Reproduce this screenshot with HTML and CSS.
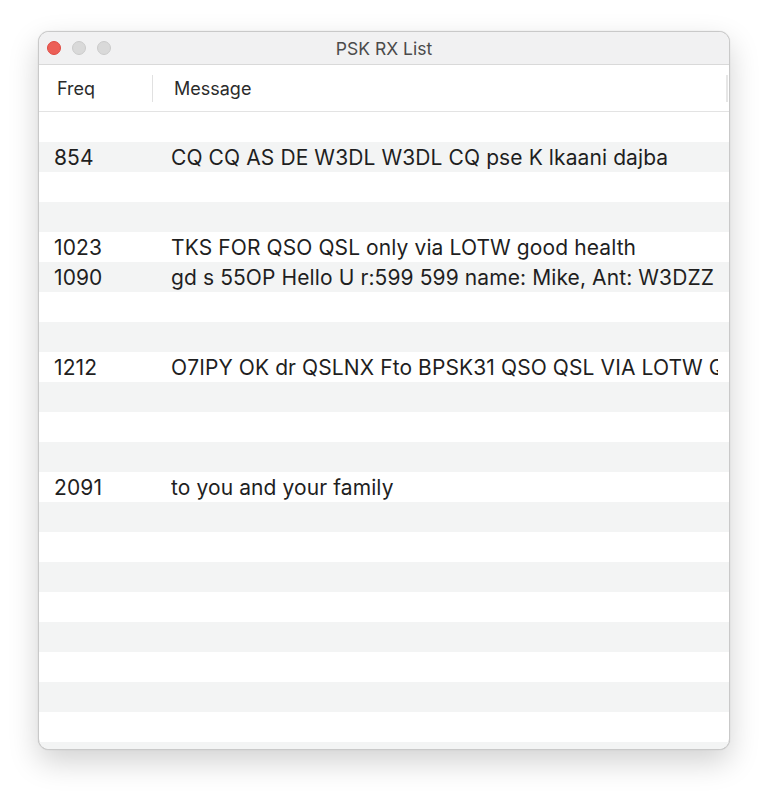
FILE: index.html
```html
<!DOCTYPE html>
<html lang="en">

<head>
  <meta charset="UTF-8">
  <meta name="viewport" content="width=device-width, initial-scale=1.0">
  <title>PSK RX List</title>

  <link rel="stylesheet" href="styles.css">
</head>

<body>
  <div class="window">
    <div class="titlebar">
      <div class="lights">
        <span class="light red"></span>
        <span class="light"></span>
        <span class="light"></span>
      </div>
      <p class="title">PSK RX List</p>
    </div>

    <div class="header">
      <div class="col freq">Freq</div>
      <div class="col msg">Message</div>
    </div>

    <ul class="rows">
      <li><span class="freq"></span><span class="msg"></span></li>
      <li><span class="freq">854</span><span class="msg">CQ CQ AS DE W3DL W3DL CQ pse K lkaani dajba</span></li>
      <li><span class="freq"></span><span class="msg"></span></li>
      <li><span class="freq"></span><span class="msg"></span></li>
      <li><span class="freq">1023</span><span class="msg">TKS FOR QSO QSL only via LOTW good health</span></li>
      <li><span class="freq">1090</span><span class="msg">gd s 55OP Hello U r:599 599 name: Mike, Ant: W3DZZ</span></li>
      <li><span class="freq"></span><span class="msg"></span></li>
      <li><span class="freq"></span><span class="msg"></span></li>
      <li><span class="freq">1212</span><span class="msg">O7IPY OK dr QSLNX Fto BPSK31 QSO QSL VIA LOTW QSL</span></li>
      <li><span class="freq"></span><span class="msg"></span></li>
      <li><span class="freq"></span><span class="msg"></span></li>
      <li><span class="freq"></span><span class="msg"></span></li>
      <li><span class="freq">2091</span><span class="msg">to you and your family</span></li>
      <li><span class="freq"></span><span class="msg"></span></li>
      <li><span class="freq"></span><span class="msg"></span></li>
      <li><span class="freq"></span><span class="msg"></span></li>
      <li><span class="freq"></span><span class="msg"></span></li>
      <li><span class="freq"></span><span class="msg"></span></li>
      <li><span class="freq"></span><span class="msg"></span></li>
      <li><span class="freq"></span><span class="msg"></span></li>
      <li><span class="freq"></span><span class="msg"></span></li>
      <li><span class="freq"></span><span class="msg"></span></li>
    </ul>
  </div>
</body>

</html>
```

FILE: styles.css
```css
* {
  margin: 0;
  padding: 0;
  box-sizing: border-box;
}

html,
body {
  height: 100%;
}

body {
  background: #fff;
  padding: 31px 0 0 38px;
  font-family: Inter, "Liberation Sans", Arial, sans-serif;
  color: #1f1f1f;
}

.window {
  width: 692px;
  height: 719px;
  border: 1px solid #c9c9c9;
  border-radius: 11px;
  overflow: hidden;
  background: #fff;
  box-shadow: 0 12px 30px rgba(0, 0, 0, 0.18), 0 0 1px rgba(0, 0, 0, 0.2);
  display: flex;
  flex-direction: column;
}

.titlebar {
  position: relative;
  height: 33px;
  flex: none;
  background: #f1f1f2;
  border-bottom: 1px solid #d9d9d9;
  display: flex;
  align-items: center;
  justify-content: center;
}

.lights {
  position: absolute;
  left: 8px;
  top: 9px;
  display: flex;
  gap: 11px;
}

.light {
  width: 14px;
  height: 14px;
  border-radius: 50%;
  background: #d9d9d9;
  border: 1px solid #cbcbcb;
}

.light.red {
  background: #ec5f57;
  border-color: #de4b43;
}

.title {
  font-size: 17.5px;
  color: #4b4b4b;
}

.header {
  height: 47px;
  flex: none;
  display: flex;
  align-items: center;
  border-bottom: 1px solid #e3e3e3;
  font-size: 18px;
  color: #2b2b2b;
}

.header .col {
  height: 27px;
  display: flex;
  align-items: center;
}

.header .freq {
  width: 114px;
  padding-left: 18px;
  border-right: 1px solid #e1e1e1;
}

.header .msg {
  flex: 1;
  padding-left: 21px;
  border-right: 2px solid #e6e6e6;
  margin-right: 1px;
}

.rows {
  list-style: none;
  flex: 1;
  overflow: hidden;
}

.rows li {
  height: 30px;
  display: flex;
  align-items: center;
  font-size: 21px;
  letter-spacing: 0.1px;
  white-space: nowrap;
}

.rows li:nth-child(even) {
  background: #f3f4f4;
}

.rows .freq {
  width: 132px;
  flex: none;
  padding-left: 15px;
}

.rows .msg {
  width: 547px;
  overflow: hidden;
}
```
